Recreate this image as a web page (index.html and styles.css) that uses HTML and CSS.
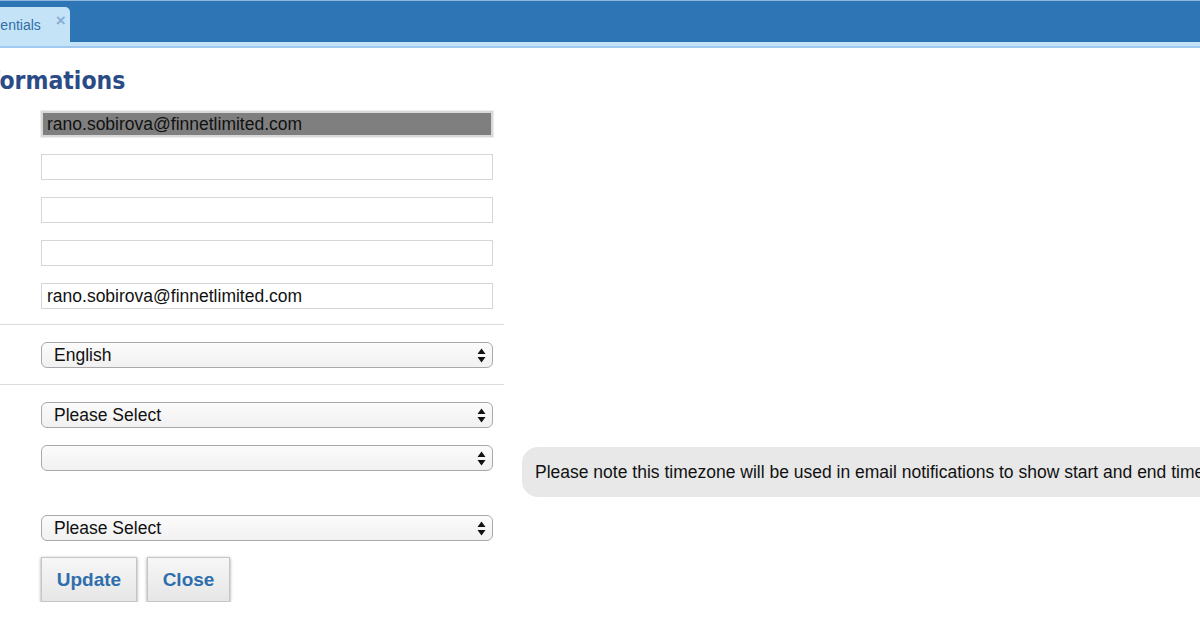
FILE: index.html
```html
<!DOCTYPE html>
<html lang="en">
<head>
  <meta charset="UTF-8" />
  <title>My Credentials</title>
  <link rel="stylesheet" href="styles.css">
</head>
<body>

  <div class="topbar">
    <div class="tab">
      <span class="tab-title">Credentials</span>
      <span class="tab-close">&times;</span>
    </div>
  </div>
  <div class="subbar"></div>

  <h1 class="title">Informations</h1>

  <form class="form">
    <div class="group first">
      <div class="row"><input class="field readonly" type="text" value="rano.sobirova@finnetlimited.com" readonly></div>
      <div class="row"><input class="field" type="text" value=""></div>
      <div class="row"><input class="field" type="text" value=""></div>
      <div class="row"><input class="field" type="text" value=""></div>
      <div class="row"><input class="field" type="text" value="rano.sobirova@finnetlimited.com"></div>
    </div>

    <div class="group">
      <div class="row">
        <div class="select"><span class="select-text">English</span><svg class="arrows" width="9" height="15" viewBox="0 0 9 15"><path d="M4.5 0.5L8.5 6H0.5Z M4.5 14.5L8.5 9H0.5Z" fill="#111"/></svg></div>
      </div>
    </div>

    <div class="group last">
      <div class="row">
        <div class="select"><span class="select-text">Please Select</span><svg class="arrows" width="9" height="15" viewBox="0 0 9 15"><path d="M4.5 0.5L8.5 6H0.5Z M4.5 14.5L8.5 9H0.5Z" fill="#111"/></svg></div>
      </div>
      <div class="row tall">
        <div class="select"><span class="select-text"></span><svg class="arrows" width="9" height="15" viewBox="0 0 9 15"><path d="M4.5 0.5L8.5 6H0.5Z M4.5 14.5L8.5 9H0.5Z" fill="#111"/></svg></div>
        <div class="note">Please note this timezone will be used in email notifications to show start and end times.</div>
      </div>
      <div class="row">
        <div class="select"><span class="select-text">Please Select</span><svg class="arrows" width="9" height="15" viewBox="0 0 9 15"><path d="M4.5 0.5L8.5 6H0.5Z M4.5 14.5L8.5 9H0.5Z" fill="#111"/></svg></div>
      </div>
    </div>

    <div class="buttons">
      <button type="button" class="btn">Update</button>
      <button type="button" class="btn close">Close</button>
    </div>
  </form>

</body>
</html>
```

FILE: styles.css
```css
html, body {
  overflow: hidden;
}
body {
  margin: 0;
  font-family: "Liberation Sans", Arial, sans-serif;
  font-size: 17.5px;
  color: #111;
  background: #fff;
}
.topbar {
  height: 41px;
  border-top: 1px solid #8fb6dc;
  background: #2e75b6;
  display: flex;
  align-items: flex-end;
}
.tab {
  height: 35px;
  margin-left: -42px;
  padding: 0 0 0 12px;
  width: 112px;
  box-sizing: border-box;
  background: #c5e3f7;
  border-radius: 0 5px 0 0;
  display: flex;
  align-items: center;
  font-size: 14px;
}
.tab-title {
  color: #2f6fa8;
}
.tab-close {
  margin-left: 15px;
  margin-top: -7px;
  color: #86aed4;
  font-weight: bold;
  font-size: 17px;
}
.subbar {
  height: 4px;
  background: #c5e3f7;
  border-bottom: 2px solid #a2c9ee;
}
.title {
  margin: 17px 0 0 -34px;
  font-family: "DejaVu Sans Condensed", "DejaVu Sans", Verdana, sans-serif;
  font-stretch: condensed;
  font-size: 24.5px;
  line-height: 32px;
  font-weight: bold;
  color: #2b4b87;
}
.form {
  margin-top: 14px;
}
.group {
  width: 504px;
  border-bottom: 1px solid #dcdcdc;
  padding: 0 0 16px 41px;
  box-sizing: border-box;
  margin-bottom: 17px;
}
.group.first {
  padding-bottom: 15px;
}
.group.last {
  border-bottom: none;
  margin-bottom: 0;
  padding-bottom: 0;
}
.row {
  display: flex;
  align-items: flex-start;
  margin-bottom: 17px;
}
.row:last-child {
  margin-bottom: 0;
}
.row.tall {
  height: 70px;
  margin-bottom: 0;
}
.field {
  width: 452px;
  height: 26px;
  box-sizing: border-box;
  border: 1px solid #d6d6d6;
  padding: 0 5px;
  font-family: "Liberation Sans", Arial, sans-serif;
  font-size: 17.5px;
  color: #111;
  background: #fff;
  outline: none;
}
.field.readonly {
  background: #7f7f7f;
  border: 2px solid #d8d8d8;
  padding: 0 4px;
  box-shadow: 0 0 0 1px #eee;
}
.select {
  position: relative;
  width: 452px;
  height: 26px;
  box-sizing: border-box;
  border: 1px solid #a9a9a9;
  border-radius: 6px;
  background: linear-gradient(#fbfbfb, #f1f1f1);
  padding-left: 12px;
  display: flex;
  align-items: center;
  flex: none;
}
.arrows {
  position: absolute;
  right: 6px;
  top: 5px;
}
.note {
  flex: none;
  margin: 2px 0 0 29px;
  height: 50px;
  padding: 0 13px;
  display: flex;
  align-items: center;
  white-space: nowrap;
  background: #e8e8e8;
  border-radius: 16px 0 0 16px;
  width: 800px;
}
.buttons {
  display: flex;
  gap: 10px;
  padding: 16px 0 0 41px;
}
.btn {
  height: 45px;
  width: 96px;
  border: 1px solid #c6c6c6;
  background: linear-gradient(#f7f7f7, #e6e6e6);
  box-shadow: 0 1px 3px rgba(0, 0, 0, 0.4);
  font-family: "Liberation Sans", Arial, sans-serif;
  font-size: 19px;
  font-weight: bold;
  color: #2e6ead;
  cursor: pointer;
}
.btn.close {
  width: 83px;
}
```
